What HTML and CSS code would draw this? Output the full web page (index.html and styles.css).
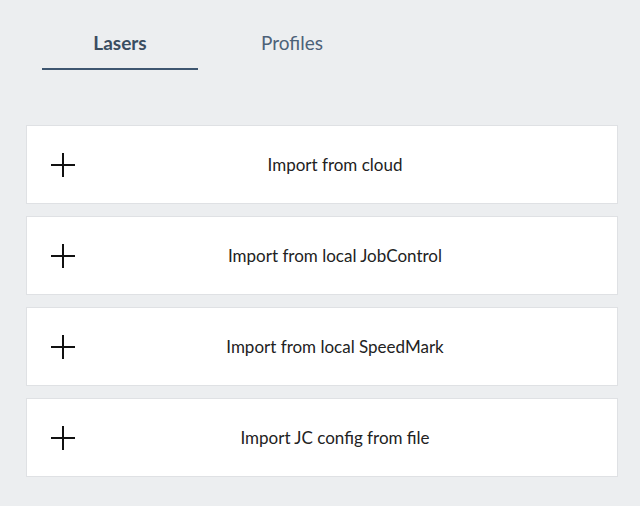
FILE: index.html
```html
<!DOCTYPE html>
<html>
<head>
<meta charset="utf-8">
<link rel="stylesheet" href="styles.css">
</head>
<body>
<div class="page">
  <nav class="tabs">
    <div class="tab active">Lasers</div>
    <div class="tab">Profiles</div>
  </nav>
  <div class="list">
    <div class="card">
      <svg class="plus" viewBox="0 0 24 24" width="24" height="24"><path d="M12 0V24M0 12H24" stroke="#111" stroke-width="2" fill="none"/></svg>
      <span class="label">Import from cloud</span>
    </div>
    <div class="card">
      <svg class="plus" viewBox="0 0 24 24" width="24" height="24"><path d="M12 0V24M0 12H24" stroke="#111" stroke-width="2" fill="none"/></svg>
      <span class="label">Import from local JobControl</span>
    </div>
    <div class="card">
      <svg class="plus" viewBox="0 0 24 24" width="24" height="24"><path d="M12 0V24M0 12H24" stroke="#111" stroke-width="2" fill="none"/></svg>
      <span class="label">Import from local SpeedMark</span>
    </div>
    <div class="card">
      <svg class="plus" viewBox="0 0 24 24" width="24" height="24"><path d="M12 0V24M0 12H24" stroke="#111" stroke-width="2" fill="none"/></svg>
      <span class="label">Import JC config from file</span>
    </div>
  </div>
</div>
</body>
</html>
```
FILE: styles.css
```css
html, body {
  margin: 0;
  padding: 0;
  background: #eceef0;
  font-family: "Lato", "Noto Sans", sans-serif;
}
.page {
  width: 640px;
  height: 506px;
  box-sizing: border-box;
  padding: 25px 22px 0 26px;
}
.tabs {
  display: flex;
  gap: 16px;
  padding-left: 16px;
}
.tab {
  width: 156px;
  height: 45px;
  box-sizing: border-box;
  text-align: center;
  font-size: 19px;
  line-height: 36px;
  color: #4c6178;
}
.tab.active {
  color: #3a4d60;
  font-weight: 700;
  border-bottom: 2px solid #3e5670;
}
.list {
  margin-top: 55px;
  display: flex;
  flex-direction: column;
  gap: 12px;
}
.card {
  height: 79px;
  box-sizing: border-box;
  background: #fff;
  border: 1px solid #dfe1e4;
  display: flex;
  align-items: center;
  position: relative;
  padding-left: 24px;
}
.plus {
  display: block;
  flex: none;
}
.label {
  position: absolute;
  left: 26px;
  right: 0;
  text-align: center;
  font-size: 17px;
  color: #222;
  pointer-events: none;
}
```
